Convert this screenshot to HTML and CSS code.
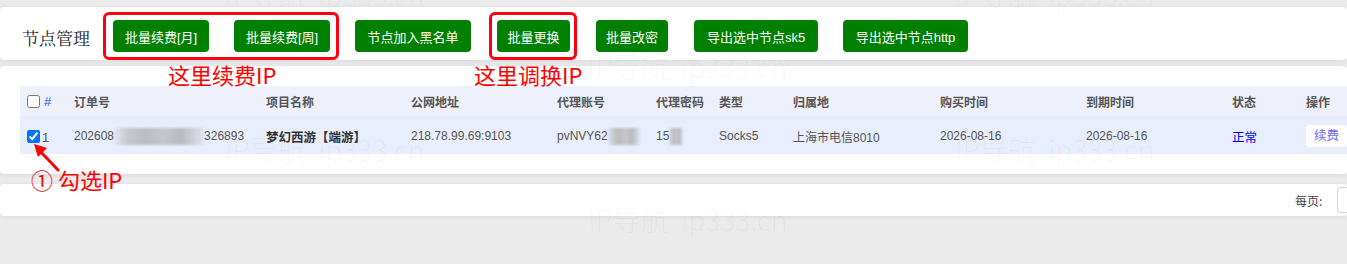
FILE: index.html
```html
<!DOCTYPE html>
<html lang="zh-CN">
<head>
<meta charset="utf-8">
<title>节点管理</title>
<link rel="stylesheet" href="styles.css">
</head>
<body>
<div class="page">
  <div class="panel toolbar">
    <div class="title">节点管理</div>
    <div class="mark mark-a">
      <button class="btn w-month">批量续费[月]</button>
      <button class="btn w-month">批量续费[周]</button>
    </div>
    <button class="btn solo w-black">节点加入黑名单</button>
    <div class="mark mark-b">
      <button class="btn w-swap">批量更换</button>
    </div>
    <button class="btn solo w-pwd">批量改密</button>
    <button class="btn solo w-sk5">导出选中节点sk5</button>
    <button class="btn solo w-http">导出选中节点http</button>
  </div>

  <div class="panel list">
    <div class="grid">
      <div class="cell head first"><input type="checkbox" class="cb"><span class="hash">#</span></div>
      <div class="cell head">订单号</div>
      <div class="cell head">项目名称</div>
      <div class="cell head">公网地址</div>
      <div class="cell head">代理账号</div>
      <div class="cell head">代理密码</div>
      <div class="cell head">类型</div>
      <div class="cell head">归属地</div>
      <div class="cell head">购买时间</div>
      <div class="cell head">到期时间</div>
      <div class="cell head">状态</div>
      <div class="cell head">操作</div>

      <div class="cell row first"><input type="checkbox" class="cb" checked><span class="num">1</span></div>
      <div class="cell row">202608<span class="blur b-order"></span>326893</div>
      <div class="cell row strong">梦幻西游【端游】</div>
      <div class="cell row">218.78.99.69:9103</div>
      <div class="cell row">pvNVY62<span class="blur b-acc"></span></div>
      <div class="cell row">15<span class="blur b-pwd"></span></div>
      <div class="cell row">Socks5</div>
      <div class="cell row">上海市电信8010</div>
      <div class="cell row">2026-08-16</div>
      <div class="cell row">2026-08-16</div>
      <div class="cell row ok">正常</div>
      <div class="cell row"><span class="renew">续费</span></div>
    </div>
  </div>

  <div class="panel pager">
    <span class="per">每页:</span>
    <span class="select"></span>
  </div>

  <div class="note note-renew">这里续费IP</div>
  <div class="note note-swap">这里调换IP</div>
  <div class="note note-check">① 勾选IP</div>
  <svg class="arrow" width="40" height="40" viewBox="0 0 40 40">
    <line x1="28" y1="30" x2="9" y2="10" stroke="#ff0000" stroke-width="3" stroke-linecap="round"/>
    <polygon points="4,4 17,8 8,17" fill="#ff0000"/>
  </svg>

  <div class="wm wm1">IP导航&nbsp;&nbsp;ip333.cn</div>
  <div class="wm wm2">IP导航&nbsp;&nbsp;ip333.cn</div>
  <div class="wm wm3">IP导航&nbsp;&nbsp;ip333.cn</div>
  <div class="wm wm4">IP导航&nbsp;&nbsp;ip333.cn</div>
  <div class="wm wm5">IP导航&nbsp;&nbsp;ip333.cn</div>
  <div class="wm wm6">IP导航&nbsp;&nbsp;ip333.cn</div>
</div>
</body>
</html>
```

FILE: styles.css
```css
html, body {
  margin: 0;
  padding: 0;
  overflow: hidden;
}
body {
  background: #ebebeb;
  font-family: "Liberation Sans", "Noto Sans CJK SC", sans-serif;
  color: #555;
}
.page {
  position: relative;
  width: 1347px;
  height: 264px;
  overflow: hidden;
  padding-top: 7px;
  box-sizing: border-box;
}
.panel {
  background: #fff;
  border-radius: 4px;
  box-shadow: 0 1px 4px rgba(90, 90, 170, 0.14);
}

/* toolbar */
.toolbar {
  height: 53px;
  display: flex;
  align-items: flex-start;
  padding: 5px 0 0 22px;
  box-sizing: border-box;
}
.title {
  width: 81px;
  margin-top: 14px;
  font-family: "Noto Serif CJK SC", "Noto Sans CJK SC", serif;
  font-size: 17px;
  line-height: 24px;
  color: #222;
}
.mark {
  display: flex;
  gap: 25px;
  border: 3px solid #ff0010;
  border-radius: 6px;
  padding: 5px 6px 5px 7px;
}
.mark-b {
  margin-left: 18px;
  padding: 5px 4px 5px 5px;
}
.btn {
  height: 32px;
  border: 0;
  border-radius: 4px;
  background: #008000;
  color: #fff;
  font-family: "Liberation Sans", "Noto Sans CJK SC", sans-serif;
  font-size: 13px;
  padding: 0;
  text-align: center;
}
.solo { margin-top: 8px; }
.w-month { width: 96px; }
.w-black { width: 116px; margin-left: 16px; }
.w-swap { width: 73px; }
.w-pwd { width: 72px; margin-left: 19px; }
.w-sk5 { width: 124px; margin-left: 26px; }
.w-http { width: 125px; margin-left: 25px; }

/* list */
.list {
  margin-top: 6px;
  padding: 20px 0 20px 20px;
  overflow: hidden;
}
.grid {
  display: grid;
  grid-template-columns: 47px 192px 145px 146px 99px 63px 74px 147px 146px 146px 74px 60px;
  width: 1339px;
}
.cell {
  display: flex;
  align-items: center;
  padding-left: 7px;
  font-size: 12px;
  white-space: nowrap;
}
.head {
  height: 32px;
  background: #eef1fb;
  font-weight: bold;
  color: #555;
  border-bottom: 1px solid #e4e8f5;
  box-sizing: border-box;
}
.row {
  height: 36px;
  background: #e8eefb;
  color: #555;
}
.cb {
  width: 13px;
  height: 13px;
  margin: 0;
}
.hash {
  margin-left: 4px;
  color: #5b84f0;
  font-size: 13px;
  font-weight: bold;
}
.num {
  margin-left: 2px;
  margin-top: 3px;
  font-size: 13px;
  color: #555;
}
.strong {
  font-weight: bold;
  color: #333;
  font-size: 12.5px;
}
.ok { color: #0000ff; font-size: 12.5px; }
.renew {
  display: inline-block;
  width: 41px;
  height: 22px;
  line-height: 22px;
  text-align: center;
  background: #fff;
  border-radius: 3px;
  color: #6a6cf5;
  font-size: 12.5px;
}
.blur {
  display: inline-block;
  height: 17px;
  background: linear-gradient(90deg, rgba(200,202,210,0.2), #c8c9cf 15%, #bcbdc3 35%, #c6c7cd 55%, #b9babf 75%, rgba(205,206,212,0.3));
  filter: blur(1px);
}
.b-order { width: 90px; }
.b-acc { width: 32px; }
.b-pwd { width: 14px; }

/* pager */
.pager {
  margin-top: 10px;
  height: 32px;
  display: flex;
  align-items: center;
  padding-left: 1295px;
  overflow: hidden;
}
.per {
  flex: none;
  white-space: nowrap;
  font-size: 12px;
  color: #444;
  font-family: "Noto Sans CJK SC", sans-serif;
}
.select {
  flex: none;
  margin-left: 15px;
  width: 60px;
  height: 24px;
  border: 1px solid #cfd3da;
  border-radius: 4px;
}

/* annotations */
.note {
  position: absolute;
  color: #ff0000;
  font-family: "Noto Sans CJK SC", sans-serif;
  font-size: 22px;
  line-height: 26px;
  white-space: nowrap;
}
.note-renew { left: 168px; top: 61px; }
.note-swap { left: 474px; top: 61px; }
.note-check { left: 31px; top: 166px; }
.arrow {
  position: absolute;
  left: 30px;
  top: 140px;
}

/* watermark */
.wm {
  position: absolute;
  font-family: "Noto Sans CJK SC", sans-serif;
  font-weight: 300;
  font-size: 28px;
  line-height: 30px;
  color: rgba(0, 0, 0, 0.04);
  white-space: nowrap;
  pointer-events: none;
}
.wm1 { left: 225px; top: -21px; }
.wm2 { left: 955px; top: -21px; }
.wm3 { left: 588px; top: 51px; }
.wm4 { left: 225px; top: 134px; }
.wm5 { left: 955px; top: 134px; }
.wm6 { left: 588px; top: 204px; }
```
